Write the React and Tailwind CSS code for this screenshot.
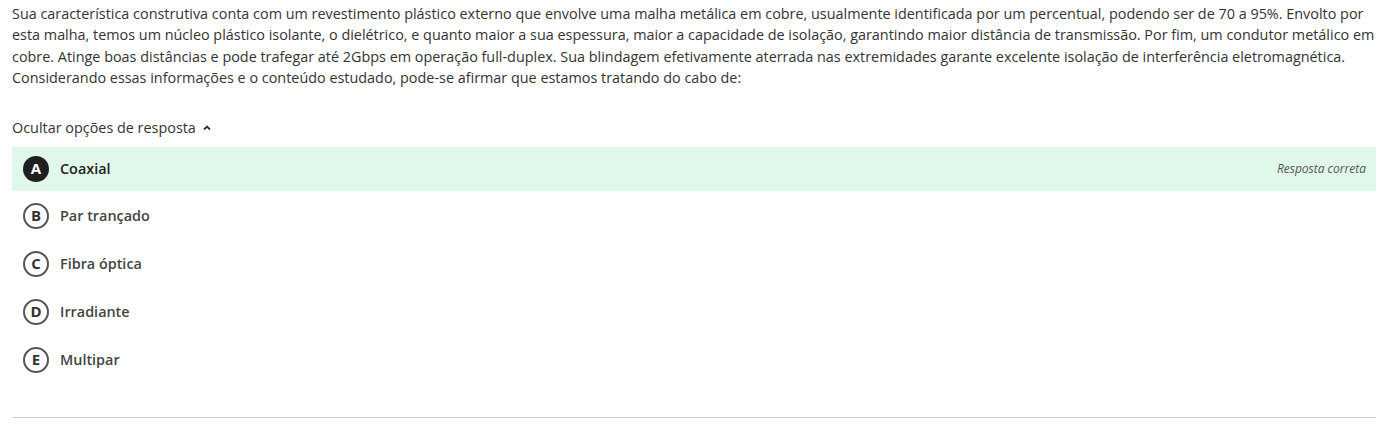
const options = [
  { letter: "A", text: "Coaxial", correct: true },
  { letter: "B", text: "Par trançado" },
  { letter: "C", text: "Fibra óptica" },
  { letter: "D", text: "Irradiante" },
  { letter: "E", text: "Multipar" },
];

const Option = ({ letter, text, correct }) => {
  if (correct) {
    return (
      <div className="flex items-center h-11 bg-[#e0f8ea]">
        <span className="ml-[11px] w-[26px] h-[26px] rounded-full bg-[#1f1f1f] text-white flex items-center justify-center text-[15px] font-bold">
          {letter}
        </span>
        <span className="ml-[11px] text-[14.4px] font-semibold text-[#222]">{text}</span>
        <span className="ml-auto mr-[10px] text-[12px] italic text-[#555]">Resposta correta</span>
      </div>
    );
  }
  return (
    <div className="flex items-center h-12">
      <span className="ml-[11px] w-[26px] h-[26px] rounded-full border-2 border-[#555] text-[#333] flex items-center justify-center text-[15px] font-bold">
        {letter}
      </span>
      <span className="ml-[11px] text-[14.4px] font-semibold text-[#444]">{text}</span>
    </div>
  );
};

export default function App() {
  return (
    <div className="bg-white pl-3 pr-[10px] pt-[3px] text-[#333] font-['Open_Sans',sans-serif]">
      <p className="text-[14.4px] leading-[21.4px]">
        Sua característica construtiva conta com um revestimento plástico externo que envolve uma malha metálica em cobre, usualmente identificada por um percentual, podendo ser de 70 a 95%. Envolto por esta malha, temos um núcleo plástico isolante, o dielétrico, e quanto maior a sua espessura, maior a capacidade de isolação, garantindo maior distância de transmissão. Por fim, um condutor metálico em cobre. Atinge boas distâncias e pode trafegar até 2Gbps em operação full-duplex. Sua blindagem efetivamente aterrada nas extremidades garante excelente isolação de interferência eletromagnética. Considerando essas informações e o conteúdo estudado, pode-se afirmar que estamos tratando do cabo de:
      </p>
      <div className="mt-[28px] flex items-center gap-[6px] text-[14.4px] leading-[21px]">
        <span>Ocultar opções de resposta</span>
        <svg width="10" height="10" viewBox="0 0 10 10" className="mt-[2px]">
          <path d="M2 6.5 L5 3.5 L8 6.5" stroke="#333" strokeWidth="1.8" fill="none" />
        </svg>
      </div>
      <div className="mt-[9px] flex flex-col">
        <Option {...options[0]} />
        <div className="h-px" />
        {options.slice(1).map((o) => (
          <Option key={o.letter} {...o} />
        ))}
      </div>
      <div className="mt-[33px] border-t border-[#d0d0d0]" />
      <div className="h-[18px]" />
    </div>
  );
}
